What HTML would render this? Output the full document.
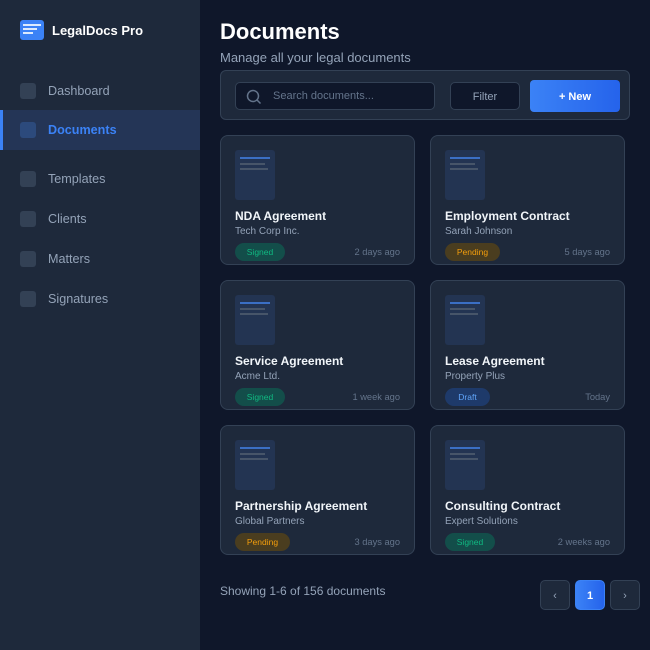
<!DOCTYPE html>
<html><head><style>
*{margin:0;padding:0;box-sizing:border-box}
body{width:650px;height:650px;background:#0f172a;font-family:"Liberation Sans",sans-serif;position:relative;overflow:hidden}
.side{position:absolute;left:0;top:0;width:200px;height:650px;background:#1e293b}
.logo{position:absolute;left:20px;top:20px;width:24px;height:20px;background:#3b82f6;border-radius:3px}
.logo i{position:absolute;left:3px;height:2px;background:#dbeafe;display:block}
.brand{position:absolute;left:52px;top:23px;color:#fff;font-weight:bold;font-size:13px}
.nav{position:absolute;left:0;width:200px;height:40px}
.nav .ic{position:absolute;left:20px;top:12px;width:16px;height:16px;border-radius:3px;background:#334155}
.nav span{position:absolute;left:48px;top:13px;font-size:12.6px;color:#94a3b8}
.nav.act{background:#243556;border-left:3px solid #3b82f6}
.nav.act .ic{background:#2c4a7c;left:17px}
.nav.act span{color:#3b82f6;font-weight:bold;left:45px}
h1{position:absolute;left:220px;top:19px;color:#fff;font-size:22px;font-weight:bold}
.sub{position:absolute;left:220px;top:50px;color:#94a3b8;font-size:13px}
.bar{position:absolute;left:220px;top:70px;width:410px;height:50px;background:#1e293b;border:1px solid #334155;border-radius:6px}
.search{position:absolute;left:235px;top:82px;width:200px;height:28px;background:#0f172a;border:1px solid #334155;border-radius:5px}
.search span{position:absolute;left:37px;top:7px;font-size:11px;color:#64748b}
.filter{position:absolute;left:450px;top:82px;width:70px;height:28px;background:#0f172a;border:1px solid #334155;border-radius:5px;color:#94a3b8;font-size:11px;text-align:center;line-height:28px}
.new{position:absolute;left:530px;top:80px;width:90px;height:32px;background:linear-gradient(90deg,#3b82f6,#2563eb);border-radius:4px;color:#fff;font-size:11px;font-weight:bold;text-align:center;line-height:34px}
.card{position:absolute;width:195px;height:130px;background:#1e293b;border:1px solid #334155;border-radius:8px}
.doc{position:absolute;left:14px;top:14px;width:40px;height:50px;background:#233452;border-radius:3px}
.doc i{position:absolute;left:5px;height:2px;display:block;background:#475569}
.card b{position:absolute;left:14px;top:73px;font-size:12px;color:#f1f5f9}
.card .c{position:absolute;left:14px;top:90px;font-size:10px;color:#94a3b8}
.badge{position:absolute;left:14px;top:107px;height:18px;border-radius:9px;font-size:8.5px;line-height:18px;text-align:center}
.s{background:#134e4a;color:#10b981;width:50px}
.p{background:#4a3d1f;color:#f59e0b;width:55px}
.d{background:#1e3a6a;color:#60a5fa;width:45px}
.t{position:absolute;right:14px;top:111px;font-size:9.3px;color:#64748b}
.foot{position:absolute;left:220px;top:584px;font-size:12px;color:#94a3b8}
.pg{position:absolute;top:580px;width:30px;height:30px;border-radius:5px;border:1px solid #334155;background:#1e293b;color:#94a3b8;font-size:11px;text-align:center;line-height:30px}
</style></head><body>
<div class="side">
<div class="logo"><i style="top:4px;width:18px"></i><i style="top:8px;width:14px"></i><i style="top:12px;width:10px"></i></div>
<div class="brand">LegalDocs Pro</div>
<div class="nav" style="top:71px"><div class="ic"></div><span>Dashboard</span></div>
<div class="nav act" style="top:110px"><div class="ic"></div><span>Documents</span></div>
<div class="nav" style="top:159px"><div class="ic"></div><span>Templates</span></div>
<div class="nav" style="top:199px"><div class="ic"></div><span>Clients</span></div>
<div class="nav" style="top:239px"><div class="ic"></div><span>Matters</span></div>
<div class="nav" style="top:279px"><div class="ic"></div><span>Signatures</span></div>
</div>
<h1>Documents</h1>
<div class="sub">Manage all your legal documents</div>
<div class="bar"></div>
<div class="search"><svg style="position:absolute;left:10px;top:6px" width="16" height="16" viewBox="0 0 16 16"><circle cx="7" cy="7" r="5.5" fill="none" stroke="#64748b" stroke-width="1.5"/><path d="M11 11l3.5 3.5" stroke="#64748b" stroke-width="1.5"/></svg><span>Search documents...</span></div>
<div class="filter">Filter</div>
<div class="new">+ New</div>

<div class="card" style="left:220px;top:135px"><div class="doc"><i style="top:7px;width:30px;background:#3b6fc4"></i><i style="top:13px;width:25px"></i><i style="top:18px;width:28px"></i></div><b>NDA Agreement</b><div class="c">Tech Corp Inc.</div><div class="badge s">Signed</div><div class="t">2 days ago</div></div>
<div class="card" style="left:430px;top:135px"><div class="doc"><i style="top:7px;width:30px;background:#3b6fc4"></i><i style="top:13px;width:25px"></i><i style="top:18px;width:28px"></i></div><b>Employment Contract</b><div class="c">Sarah Johnson</div><div class="badge p">Pending</div><div class="t">5 days ago</div></div>
<div class="card" style="left:220px;top:280px"><div class="doc"><i style="top:7px;width:30px;background:#3b6fc4"></i><i style="top:13px;width:25px"></i><i style="top:18px;width:28px"></i></div><b>Service Agreement</b><div class="c">Acme Ltd.</div><div class="badge s">Signed</div><div class="t">1 week ago</div></div>
<div class="card" style="left:430px;top:280px"><div class="doc"><i style="top:7px;width:30px;background:#3b6fc4"></i><i style="top:13px;width:25px"></i><i style="top:18px;width:28px"></i></div><b>Lease Agreement</b><div class="c">Property Plus</div><div class="badge d">Draft</div><div class="t">Today</div></div>
<div class="card" style="left:220px;top:425px"><div class="doc"><i style="top:7px;width:30px;background:#3b6fc4"></i><i style="top:13px;width:25px"></i><i style="top:18px;width:28px"></i></div><b>Partnership Agreement</b><div class="c">Global Partners</div><div class="badge p">Pending</div><div class="t">3 days ago</div></div>
<div class="card" style="left:430px;top:425px"><div class="doc"><i style="top:7px;width:30px;background:#3b6fc4"></i><i style="top:13px;width:25px"></i><i style="top:18px;width:28px"></i></div><b>Consulting Contract</b><div class="c">Expert Solutions</div><div class="badge s">Signed</div><div class="t">2 weeks ago</div></div>

<div class="foot">Showing 1-6 of 156 documents</div>
<div class="pg" style="left:540px">‹</div>
<div class="pg" style="left:575px;background:linear-gradient(90deg,#3b82f6,#2563eb);border-color:#3b82f6;color:#fff;font-weight:bold">1</div>
<div class="pg" style="left:610px">›</div>
</body></html>
